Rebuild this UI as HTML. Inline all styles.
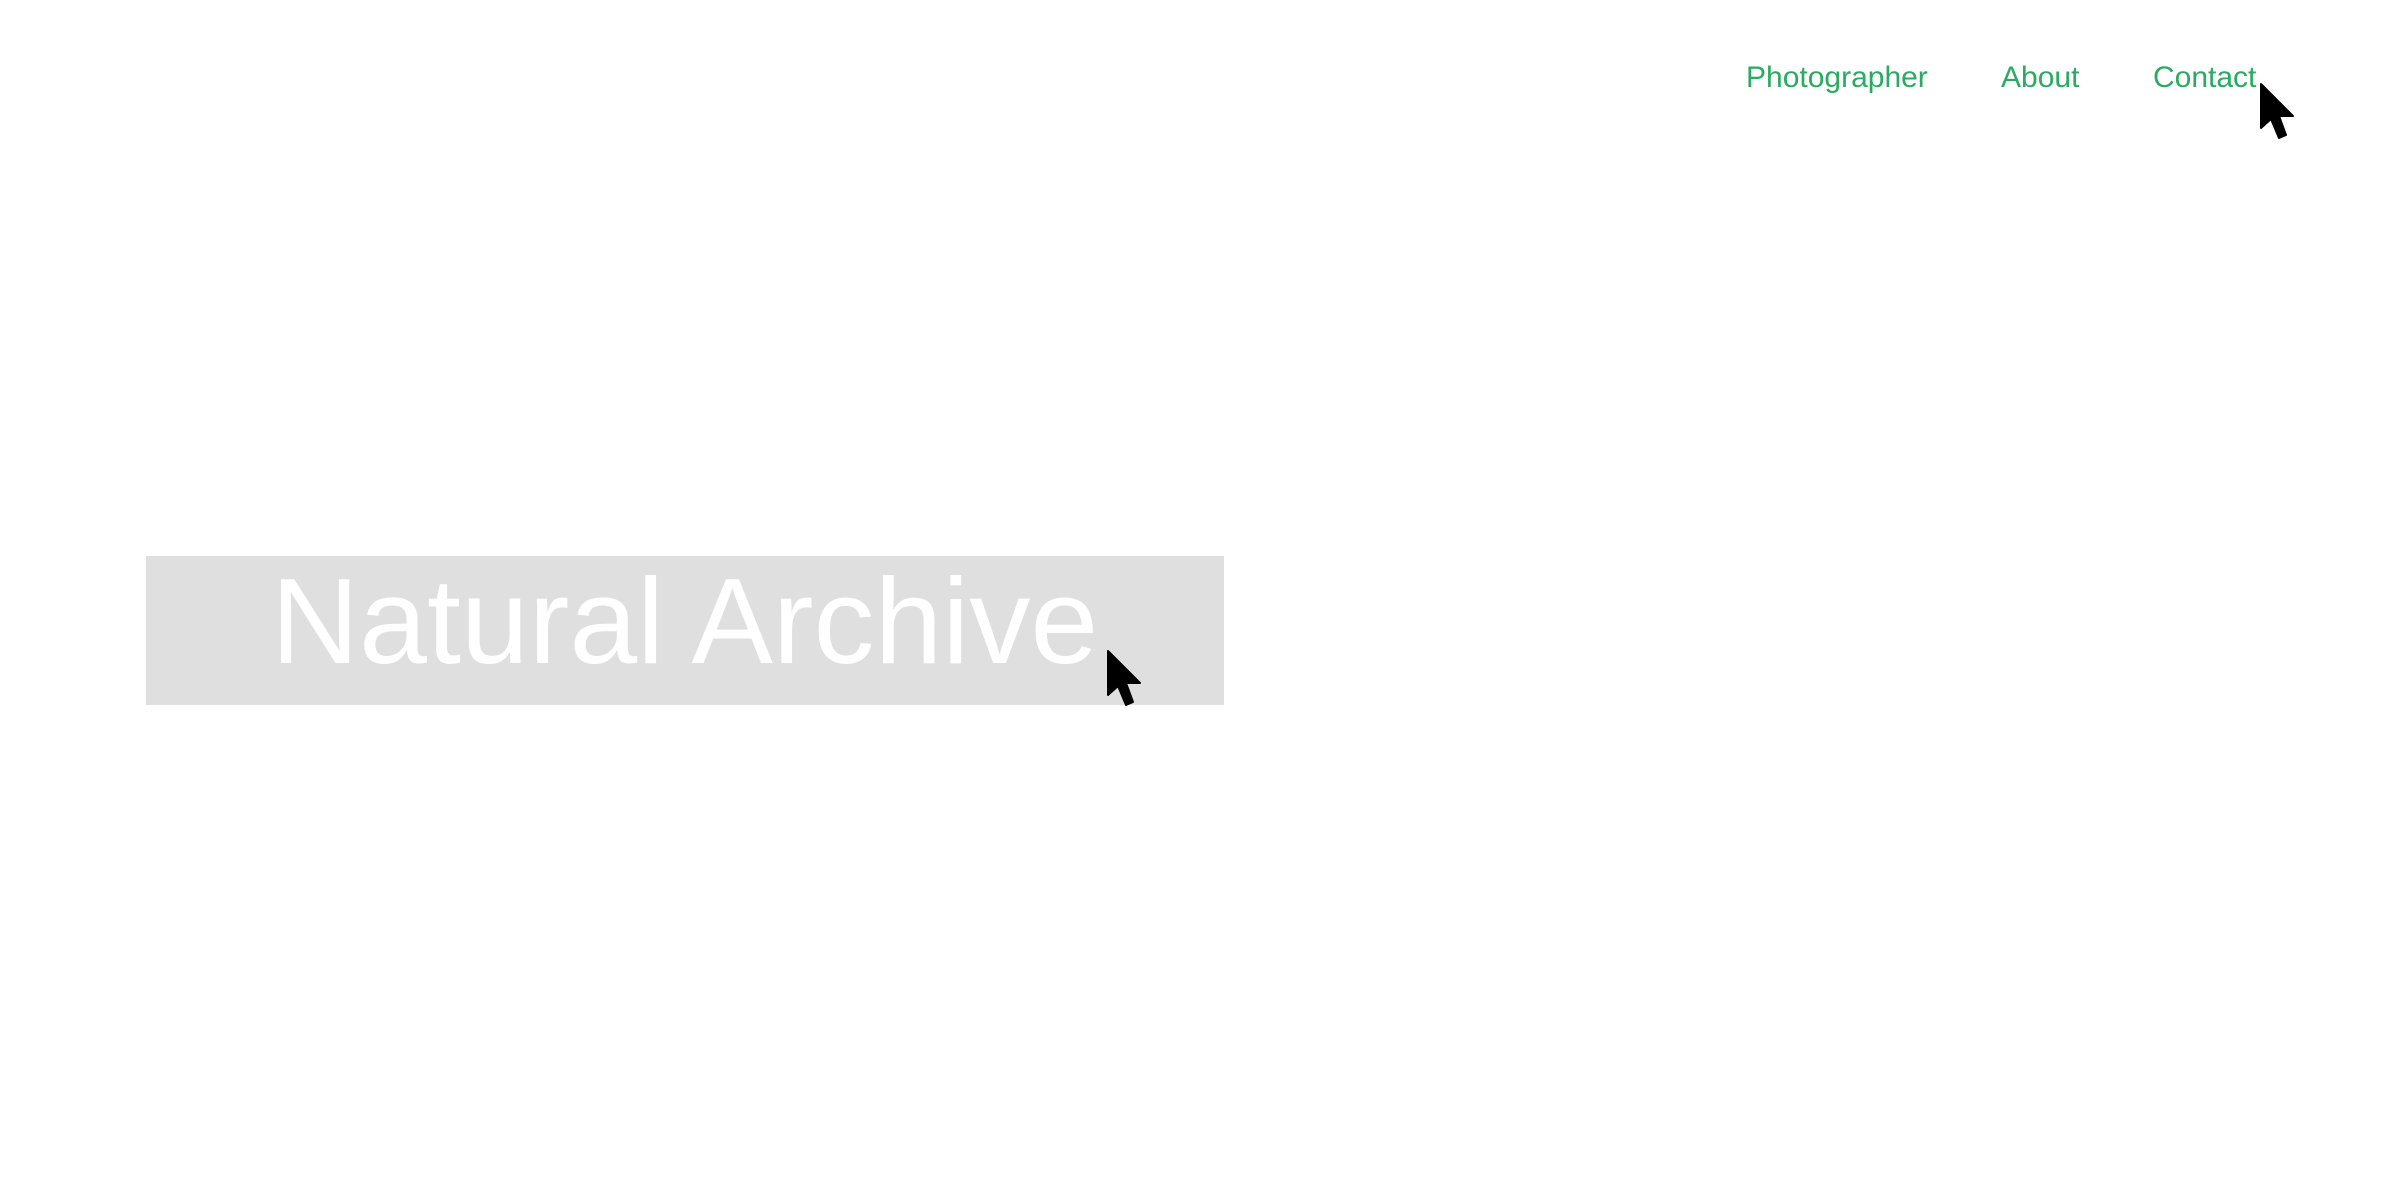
<!DOCTYPE html>
<html><head><meta charset="utf-8"><style>
html,body{margin:0;padding:0;background:#fff;width:2400px;height:1200px;overflow:hidden;position:relative;font-family:"Liberation Sans",sans-serif}
.nav{position:absolute;top:63px;font-size:30px;color:#2aaa63;line-height:1}
.box{position:absolute;left:146px;top:556px;width:1078px;height:149px;background:#dfdfdf}
.title{position:absolute;left:271px;top:560px;font-size:122px;color:#fff;line-height:1;white-space:nowrap}
svg{position:absolute}
</style></head><body>
<div class="nav" style="left:1746px">Photographer</div>
<div class="nav" style="left:2001px">About</div>
<div class="nav" style="left:2153px">Contact</div>
<div class="box"></div>
<div class="title">Natural Archive</div>
<svg style="left:2259px;top:82px" width="36" height="58" viewBox="0 0 36 58"><path d="M2 2 L2 46 L12 37 L20 56 L27 53 L20 34 L34 34 Z" fill="#000" stroke="#000" stroke-width="2" stroke-linejoin="round"/></svg>
<svg style="left:1106px;top:649px" width="36" height="58" viewBox="0 0 36 58"><path d="M2 2 L2 46 L12 37 L20 56 L27 53 L20 34 L34 34 Z" fill="#000" stroke="#000" stroke-width="2" stroke-linejoin="round"/></svg>
</body></html>
